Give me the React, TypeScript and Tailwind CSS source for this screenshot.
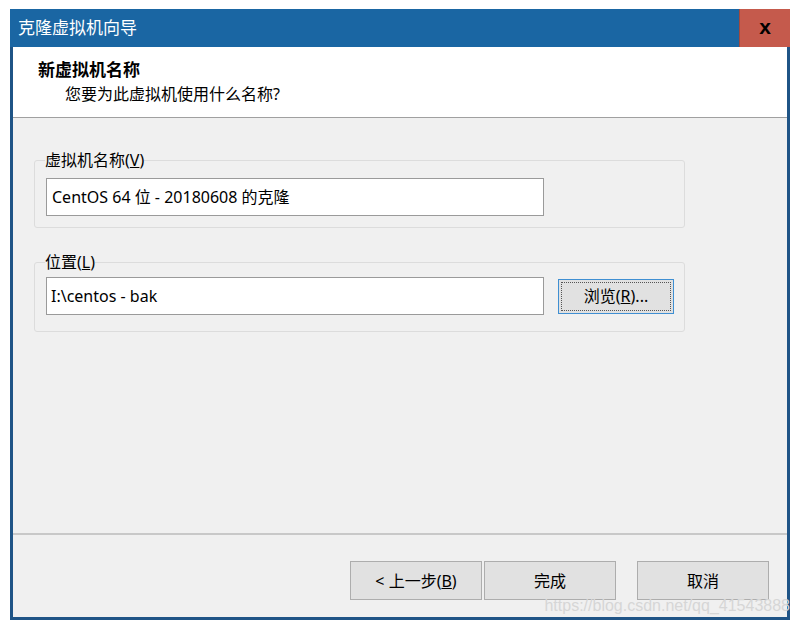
import React from "react";

const font = { fontFamily: '"Noto Sans", "Noto Sans CJK SC", sans-serif' };

const Btn = ({ children, className = "" }: { children: React.ReactNode; className?: string }) => (
  <button
    className={
      "h-[39px] w-[132px] border border-[#adadad] bg-[#e1e1e1] text-[16px] text-black flex items-center justify-center " +
      className
    }
  >
    {children}
  </button>
);

const App = () => {
  return (
    <div className="w-[799px] h-[629px] bg-white pt-[9px] pl-[10px]" style={font}>
      <div className="w-[780px] h-[611px] flex flex-col border-x-[3px] border-b-[3px] border-[#1f5486] bg-[#f0f0f0] relative">
        {/* title bar */}
        <div className="h-[38px] bg-[#1a66a3] flex items-center justify-between -mx-[3px] pl-[8px]">
          <span className="text-white text-[17px]">克隆虚拟机向导</span>
          <div className="w-[51px] h-[38px] bg-[#c55a4c] flex items-center justify-center border-l border-[#a04a3e]">
            <span
              className="text-black font-bold text-[21px] leading-none -mt-[4px]"
              style={{ fontFamily: '"Liberation Sans", sans-serif' }}
            >
              x
            </span>
          </div>
        </div>

        {/* header */}
        <div className="h-[71px] bg-white border-b border-[#a0a0a0] pl-[25px] pt-[11px] flex flex-col">
          <span className="font-bold text-[17px] leading-[24px]">新虚拟机名称</span>
          <span className="text-[16px] leading-[24px] pl-[27px]">您要为此虚拟机使用什么名称?</span>
        </div>

        {/* body */}
        <div className="flex-1 pt-[31px] pl-[21px] flex flex-col gap-[23px]">
          <fieldset className="w-[651px] border border-[#dcdcdc] rounded-[3px] px-[10px] pt-[7px] pb-[11px]">
            <legend className="text-[16px] leading-[22px] px-0">
              虚拟机名称(<span className="underline">V</span>)
            </legend>
            <div className="w-[498px] h-[38px] bg-white border border-[#9a9a9a] flex items-center pl-[5px] text-[16px] ml-[1px]">
              CentOS 64 位 - 20180608 的克隆
            </div>
          </fieldset>

          <fieldset className="w-[651px] border border-[#dcdcdc] rounded-[3px] px-[10px] pt-[4px] pb-[16px]">
            <legend className="text-[16px] leading-[22px] px-0">
              位置(<span className="underline">L</span>)
            </legend>
            <div className="flex items-center gap-[14px] ml-[1px]">
              <div className="w-[498px] h-[38px] bg-white border border-[#9a9a9a] flex items-center pl-[4px] text-[16px]">
                I:\centos - bak
              </div>
              <button className="w-[116px] h-[35px] border border-[#3f8fd2] bg-[#e1e1e1] p-[2px]">
                <div className="w-full h-full border border-dotted border-[#555] flex items-center justify-center text-[16px]">
                  浏览(<span className="underline">R</span>)...
                </div>
              </button>
            </div>
          </fieldset>
        </div>

        {/* footer */}
        <div className="h-[84px] border-t-2 border-[#c8c8c8] flex items-start justify-end pt-[26px] pr-[18px]">
          <Btn className="mr-[2px]">
            &lt; 上一步(<span className="underline">B</span>)
          </Btn>
          <Btn className="mr-[21px]">完成</Btn>
          <Btn className="w-[131px]">取消</Btn>
        </div>

        <span
          className="absolute right-[-3px] bottom-[3px] text-[16px] text-[#d6d6d6] leading-none"
          style={{ fontFamily: '"Liberation Sans", sans-serif' }}
        >
          https://blog.csdn.net/qq_41543888
        </span>
      </div>
    </div>
  );
};

export default App;
